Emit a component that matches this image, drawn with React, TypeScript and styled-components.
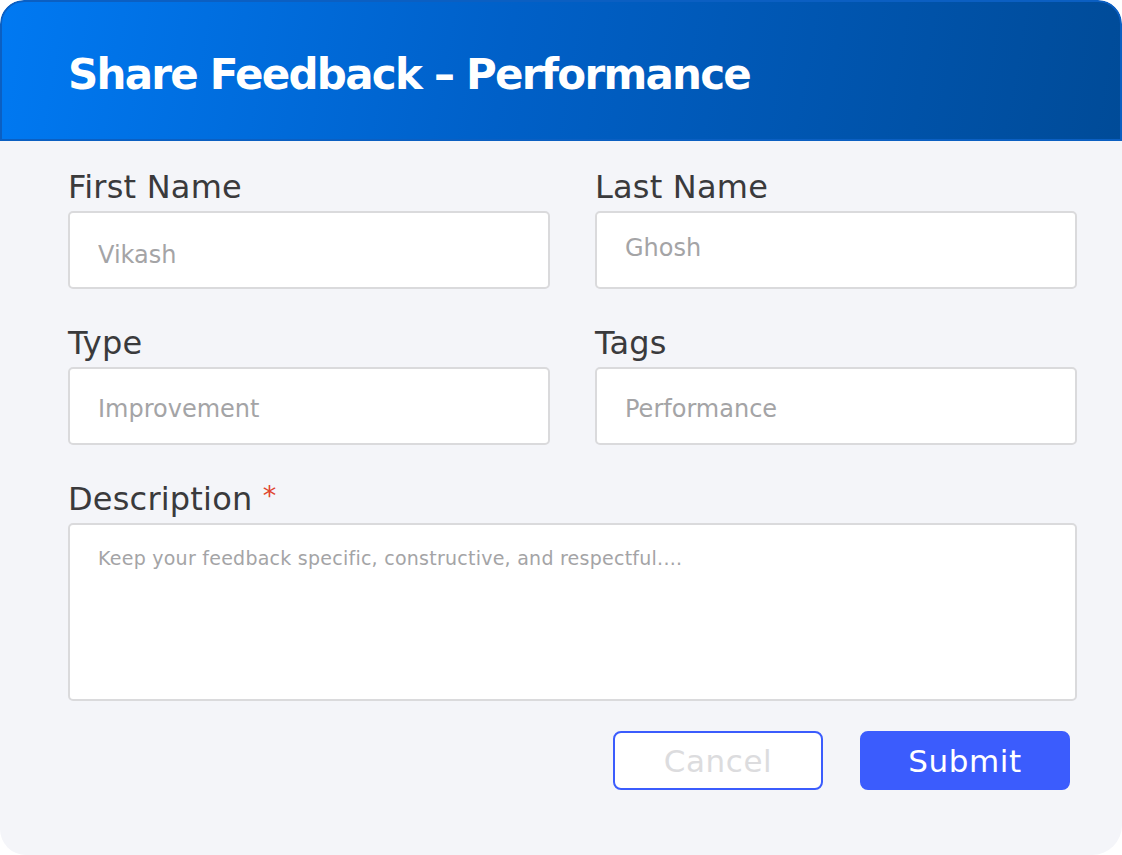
import { createGlobalStyle, styled } from 'styled-components'

const GlobalStyle = createGlobalStyle`
  html, body {
    margin: 0;
    padding: 0;
    background: #ffffff;
  }
  * {
    box-sizing: border-box;
  }
`

const FONT = `"DejaVu Sans", "Open Sans", sans-serif`

function App() {
  return (
    <>
      <GlobalStyle />
      <Card>
        <Header>
          <Title>Share Feedback – Performance</Title>
        </Header>
        <Body>
          <FieldGrid>
            <Field>
              <Label>First Name</Label>
              <TextInput placeholder="Vikash" $offset={4.5} />
            </Field>
            <Field>
              <Label>Last Name</Label>
              <TextInput placeholder="Ghosh" $offset={-2.5} />
            </Field>
            <Field>
              <Label>Type</Label>
              <TextInput placeholder="Improvement" $offset={3} />
            </Field>
            <Field>
              <Label>Tags</Label>
              <TextInput placeholder="Performance" $offset={3} />
            </Field>
            <Field $wide>
              <Label>
                Description <Required>*</Required>
              </Label>
              <TextArea placeholder="Keep your feedback specific, constructive, and respectful...." />
            </Field>
          </FieldGrid>
          <Actions>
            <Button type="button" $variant="outline">
              Cancel
            </Button>
            <Button type="button" $variant="solid">
              Submit
            </Button>
          </Actions>
        </Body>
      </Card>
    </>
  )
}

export default App

const Card = styled.div`
  width: 1122px;
  height: 855px;
  border-radius: 24px 24px 30px 26px;
  background: #f4f5f9;
  overflow: hidden;
  font-family: ${FONT};
`

const Header = styled.header`
  height: 141px;
  display: flex;
  align-items: center;
  padding: 10px 0 2px 66px;
  border: 2px solid #0b5fc2;
  border-radius: 24px 24px 0 0;
  background: linear-gradient(100deg, #0079f2 0%, #0060c8 45%, #004b98 100%);
`

const Title = styled.h1`
  margin: 0;
  color: #ffffff;
  font-size: 42px;
  font-weight: 700;
  letter-spacing: -1.75px;
`

const Body = styled.div`
  padding: 26px 45px 0 68px;
`

const FieldGrid = styled.div`
  display: grid;
  grid-template-columns: 1fr 1fr;
  column-gap: 45px;
  row-gap: 34px;
`

const Field = styled.div<{ $wide?: boolean }>`
  display: flex;
  flex-direction: column;
  gap: 4px;
  grid-column: ${(p) => (p.$wide ? '1 / -1' : 'auto')};
`

const Label = styled.label`
  font-size: 32px;
  line-height: 40px;
  letter-spacing: 0.2px;
  color: #3a3a3c;
  font-weight: 400;
`

const Required = styled.span`
  color: #e0462f;
  font-size: 27px;
  vertical-align: top;
  line-height: 34px;
`

const TextInput = styled.input<{ $offset?: number }>`
  height: 78px;
  width: 100%;
  padding: ${(p) => Math.max(0, (p.$offset ?? 0) * 2)}px 28px
    ${(p) => Math.max(0, -(p.$offset ?? 0) * 2)}px 28px;
  border: 2px solid #dadadc;
  border-radius: 5px;
  background: #ffffff;
  font-family: ${FONT};
  font-size: 24px;
  color: #3a3a3c;
  outline: none;

  &::placeholder {
    color: #a4a4a6;
  }
`

const TextArea = styled.textarea`
  height: 178px;
  width: 100%;
  padding: 22px 28px;
  border: 2px solid #dadadc;
  border-radius: 5px;
  background: #ffffff;
  font-family: ${FONT};
  font-size: 19px;
  letter-spacing: 0.25px;
  color: #3a3a3c;
  resize: none;
  outline: none;

  &::placeholder {
    color: #a4a4a6;
  }
`

const Actions = styled.div`
  display: flex;
  justify-content: flex-end;
  gap: 37px;
  margin-top: 30px;
  padding-right: 7px;
`

const Button = styled.button<{ $variant: 'outline' | 'solid' }>`
  width: 210px;
  height: 59px;
  padding: 0;
  border-radius: 8px;
  border: 2px solid #3b5cfd;
  background: ${(p) => (p.$variant === 'solid' ? '#3b5cfd' : '#ffffff')};
  color: ${(p) => (p.$variant === 'solid' ? '#ffffff' : '#dcdcde')};
  font-family: ${FONT};
  font-size: 31px;
  letter-spacing: 0.6px;
  font-weight: 400;
  cursor: pointer;
`
